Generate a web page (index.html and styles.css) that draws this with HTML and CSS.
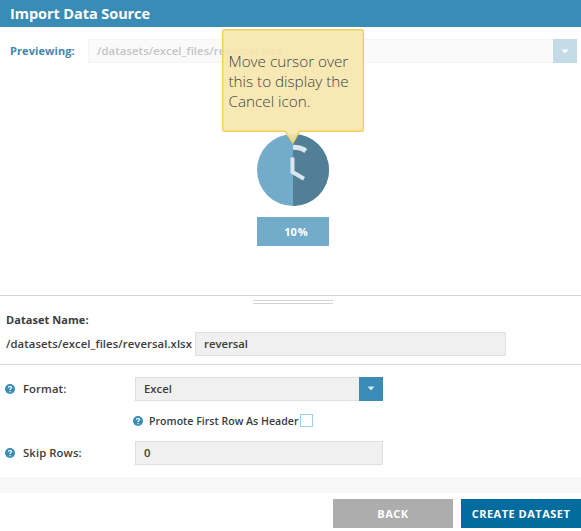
FILE: index.html
```html
<!DOCTYPE html>
<html lang="en">
<head>
<meta charset="utf-8">
<title>Import Data Source</title>
<link rel="stylesheet" href="styles.css">
</head>
<body>
<div class="dialog">
  <header class="title">Import Data Source</header>
  <section class="preview">
    <div class="preview-row">
      <span class="preview-label">Previewing:</span>
      <div class="select faded">
        <span class="value">/datasets/excel_files/reversal.xlsx</span>
        <span class="arrow"><svg width="8" height="5" viewBox="0 0 8 5"><path d="M0.5 0.5h7L4 4.5z" fill="#fff"/></svg></span>
      </div>
    </div>
    <div class="progress">
      <svg class="clock" width="72" height="72" viewBox="0 0 72 72">
        <circle cx="36" cy="36" r="36" fill="#73acca"/>
        <path d="M36 0a36 36 0 0 1 0 72z" fill="#517f95"/>
        <path d="M36 13.300C41 13.300 45.500 14.500 48.800 17" fill="none" stroke="#dbe5ec" stroke-width="5"/>
        <path d="M35.500 23.500v14.500l11.500 6.800" fill="none" stroke="#dbe5ec" stroke-width="4"/>
      </svg>
      <div class="percent">10<span class="sign">%</span></div>
    </div>
    <div class="tooltip">
      <svg class="bubble" width="142" height="116" viewBox="0 0 142 116">
        <path d="M2.500 .7H139.500Q141.300 .7 141.300 2.500V100.500Q141.300 102.300 139.500 102.300H77.500L71 114L63 102.300H2.500Q.7 102.300 .7 100.500V2.500Q.7 .7 2.500 .7z" fill="#f7e6ac" fill-opacity=".9" stroke="#f5cf5c" stroke-width="1.400"/>
      </svg>
      <p>Move cursor over<br>this to display the<br>Cancel icon.</p>
    </div>
  </section>
  <section class="dataset">
    <div class="handle"></div>
    <div class="name-label">Dataset Name:</div>
    <div class="name-row">
      <span class="path">/datasets/excel_files/reversal.xlsx</span>
      <div class="field name-field">reversal</div>
    </div>
  </section>
  <section class="options">
    <div class="row">
      <svg class="help" width="10" height="10" viewBox="0 0 10 10"><circle cx="5" cy="5" r="5" fill="#388cb5"/><path d="M3.500 3.800C3.500 1.900 6.600 2 6.500 3.800C6.400 4.800 5 4.700 5 6M5 7v1.200" fill="none" stroke="#fff" stroke-width="1.200"/></svg>
      <span class="label">Format:</span>
      <div class="select format"><span class="value">Excel</span>
        <span class="arrow"><svg width="8" height="5" viewBox="0 0 8 5"><path d="M0.500 0.500h7L4 4.500z" fill="#d5e8f2"/></svg></span>
      </div>
    </div>
    <div class="check-row">
      <svg class="help" width="10" height="10" viewBox="0 0 10 10"><circle cx="5" cy="5" r="5" fill="#388cb5"/><path d="M3.500 3.800C3.500 1.900 6.600 2 6.500 3.800C6.400 4.800 5 4.700 5 6M5 7v1.200" fill="none" stroke="#fff" stroke-width="1.200"/></svg>
      <span class="check-label">Promote First Row As Header</span>
      <span class="box"></span>
    </div>
    <div class="row">
      <svg class="help" width="10" height="10" viewBox="0 0 10 10"><circle cx="5" cy="5" r="5" fill="#388cb5"/><path d="M3.500 3.800C3.500 1.900 6.600 2 6.500 3.800C6.400 4.800 5 4.700 5 6M5 7v1.200" fill="none" stroke="#fff" stroke-width="1.200"/></svg>
      <span class="label">Skip Rows:</span>
      <div class="field skip-field">0</div>
    </div>
    <div class="advanced">Advanced Options</div>
  </section>
  <footer class="actions">
    <div class="btn back">BACK</div>
    <div class="btn create">CREATE DATASET</div>
  </footer>
</div>
</body>
</html>
```
FILE: styles.css
```css
* { box-sizing: border-box; }
body {
  margin: 0;
  background: #fff;
  font: 550 11.300px/24px "Open Sans", sans-serif;
  color: #3c3c3c;
}
svg { display: block; flex: none; }
.dialog {
  width: 581px;
  height: 531px;
  display: flex;
  flex-direction: column;
  overflow: hidden;
}
.title {
  height: 27px;
  padding-left: 10px;
  background: #388cb5;
  color: #fff;
  font-size: 14.500px;
  font-weight: 700;
  line-height: 27px;
  letter-spacing: -.07px;
}
.preview {
  position: relative;
  height: 269px;
  padding-top: 12px;
  border-bottom: 1px solid #d2d2d2;
}
.preview-row {
  display: flex;
  padding: 0 4px 0 10px;
}
.preview-label {
  width: 78px;
  color: #4187ae;
  font-size: 11px;
  font-weight: 700;
  letter-spacing: .08px;
}
.select {
  display: flex;
  justify-content: space-between;
  height: 24px;
  background: #f0f0f0;
  border: 1px solid #dfdfdf;
  line-height: 22px;
}
.select .value { padding-left: 8px; }
.arrow {
  display: flex;
  align-items: center;
  justify-content: center;
  width: 24px;
  height: 24px;
  margin: -1px -1px 0 0;
  background: #388cb5;
}
.faded {
  flex: 1;
  background: #fafafa;
  border-color: #f5f5f5;
  color: #c4c4c4;
  letter-spacing: .08px;
}
.faded .arrow { background: #c3dbe7; }
.progress {
  width: 72px;
  margin: 71px 0 0 257px;
}
.percent {
  height: 29px;
  margin-top: 11px;
  padding-left: 6px;
  background: #73acca;
  color: #fff;
  font-size: 11px;
  font-weight: 700;
  line-height: 29px;
  text-align: center;
}
.sign { margin-left: 1px; }
.tooltip {
  position: absolute;
  left: 222px;
  top: 2px;
  width: 142px;
  height: 116px;
}
.bubble { position: absolute; }
.tooltip p {
  position: relative;
  margin: 0;
  padding: 22px 0 0 6.500px;
  font-size: 15.300px;
  font-weight: 330;
  line-height: 20px;
  letter-spacing: -.03px;
  color: #444;
  white-space: nowrap;
}
.dataset {
  height: 69px;
  border-bottom: 1px solid #d9d9d9;
}
.handle {
  width: 80px;
  height: 4px;
  margin: 4px 0 0 253px;
  border: solid #d4d4d4;
  border-width: 1px 0;
}
.name-label {
  height: 24px;
  margin-top: 4px;
  padding-left: 6px;
  font-size: 11px;
  font-weight: 700;
  line-height: 24px;
  letter-spacing: .06px;
}
.name-row {
  display: flex;
  padding-left: 6px;
}
.path {
  width: 189px;
  letter-spacing: .08px;
}
.field {
  height: 24px;
  padding-left: 8px;
  border: 1px solid #dfdfdf;
  background: #f0f0f0;
  line-height: 22px;
}
.name-field { width: 311px; }
.options {
  height: 128px;
  padding-top: 11px;
  overflow: hidden;
}
.row {
  display: flex;
  align-items: center;
  height: 25px;
  padding-left: 5px;
}
.label {
  width: 112px;
  margin-left: 8px;
  letter-spacing: .1px;
}
.format, .skip-field { width: 248px; }
.check-row {
  display: flex;
  align-items: center;
  height: 39px;
  padding-left: 133px;
}
.check-label {
  width: 151px;
  margin-left: 6px;
  font-size: 10.600px;
  white-space: nowrap;
}
.check-row .box {
  width: 13px;
  height: 13px;
  border: 1px solid #9dcdf0;
}
.advanced {
  height: 40px;
  margin-top: 12px;
  padding: 8px 0 0 22px;
  background: #f8f8f8;
  font-size: 11px;
  font-weight: 700;
}
.actions {
  display: flex;
  justify-content: flex-end;
  gap: 8px;
  margin-top: 6px;
}
.btn {
  width: 120px;
  height: 29px;
  color: #fff;
  font-size: 11px;
  font-weight: 700;
  line-height: 29px;
  letter-spacing: .5px;
  text-align: center;
}
.back { background: #adadad; }
.create { background: #036c9f; }
```
